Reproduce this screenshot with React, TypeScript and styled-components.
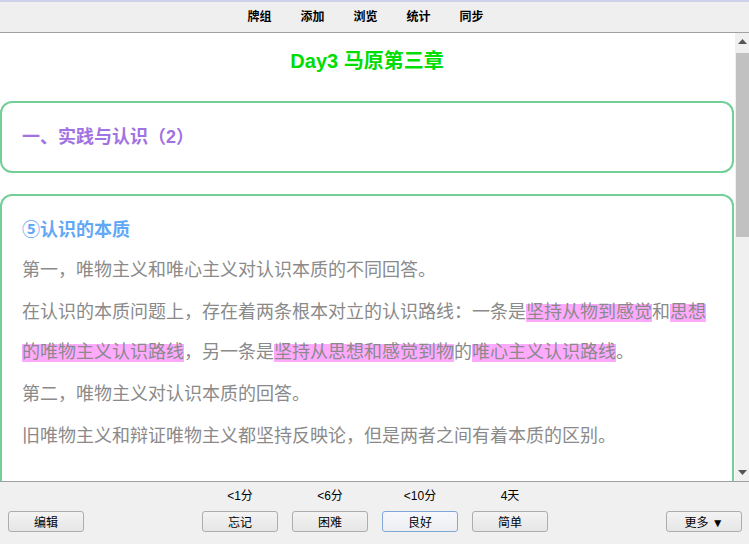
import React from 'react'
import styled, { createGlobalStyle } from 'styled-components'

const GlobalStyle = createGlobalStyle`
  html, body {
    margin: 0;
    height: 100%;
    overflow: hidden;
    background: #f0f0f0;
  }
  #root {
    height: 100%;
  }
`

const cjk = `"Liberation Sans", "Noto Sans CJK SC", sans-serif`

const Window = styled.div`
  display: flex;
  flex-direction: column;
  height: 100vh;
  font-family: ${cjk};
`

const TopStrip = styled.div`
  height: 2px;
  background: #cdd1ea;
`

const Toolbar = styled.nav`
  display: flex;
  justify-content: center;
  align-items: center;
  gap: 29px;
  height: 30px;
  padding-right: 18px;
  background: #efefef;
  border-bottom: 1px solid #a0a0a0;
`

const NavLink = styled.span`
  font-size: 12px;
  font-weight: bold;
  color: #000;
  line-height: 14px;
`

const Main = styled.div`
  flex: 1;
  display: flex;
  min-height: 0;
`

const Content = styled.div`
  flex: 1;
  background: #fff;
  overflow: hidden;
  padding-right: 1px;
`

const Title = styled.h1`
  margin: 14px 0 26px;
  text-align: center;
  font-size: 20px;
  line-height: 28px;
  font-weight: bold;
  color: #00dd00;
`

const Card = styled.section<{ $gap?: number; $bottom?: number }>`
  border: 2px solid #72cf95;
  border-radius: 12px;
  padding: 22px 20px ${({ $bottom }) => $bottom ?? 22}px;
  margin-bottom: ${({ $gap }) => $gap ?? 0}px;
`

const Heading = styled.h2<{ $color: string }>`
  margin: 0;
  font-size: 18px;
  line-height: 24px;
  font-weight: bold;
  color: ${({ $color }) => $color};
`

const Paragraph = styled.p<{ $top?: number }>`
  margin: ${({ $top }) => $top ?? 2}px 0 0;
  font-size: 18px;
  line-height: 40px;
  color: #8a8a8a;
`

const Mark = styled.span`
  background: linear-gradient(transparent 2px, #ffaaff 2px, #ffaaff 23px, transparent 23px);
`

const Scrollbar = styled.div`
  width: 14px;
  display: flex;
  flex-direction: column;
  background: #f0f0f0;
`

const Arrow = styled.div`
  height: 17px;
  display: flex;
  align-items: center;
  justify-content: center;
`

const Thumb = styled.div`
  height: 184px;
  margin: 3px 0 0 1px;
  background: #c1c1c1;
`

const Spacer = styled.div`
  flex: 1;
`

const BottomBar = styled.footer`
  display: grid;
  grid-template-columns: 1fr auto 1fr;
  align-items: end;
  height: 63px;
  padding: 7px 7px 13px 8px;
  box-sizing: border-box;
  border-top: 1px solid #a0a0a0;
  background: #f0f0f0;
`

const AnswerGroup = styled.div`
  display: flex;
  gap: 14px;
`

const AnswerColumn = styled.div`
  display: flex;
  flex-direction: column;
  align-items: center;
  gap: 8px;
`

const Interval = styled.span`
  font-size: 12px;
  line-height: 14px;
  color: #000;
`

const Button = styled.button<{ $focused?: boolean; $align?: string }>`
  justify-self: ${({ $align }) => $align ?? 'center'};
  width: 76px;
  height: 21px;
  padding: 0;
  font-family: ${cjk};
  font-size: 12px;
  color: #000;
  border: 1px solid ${({ $focused }) => ($focused ? '#7fa6d6' : '#adadad')};
  border-radius: 3px;
  background: ${({ $focused }) =>
    $focused ? 'linear-gradient(#f6f8fb, #eceef2)' : 'linear-gradient(#f3f3f3, #e6e6e6)'};
`

const TriUp = () => (
  <svg width="9" height="5" viewBox="0 0 9 5">
    <path d="M0 5 L4.5 0 L9 5 Z" fill="#555" />
  </svg>
)

const TriDown = () => (
  <svg width="9" height="5" viewBox="0 0 9 5">
    <path d="M0 0 L4.5 5 L9 0 Z" fill="#555" />
  </svg>
)

const navItems = ['牌组', '添加', '浏览', '统计', '同步']

const answers = [
  { interval: '<1分', label: '忘记' },
  { interval: '<6分', label: '困难' },
  { interval: '<10分', label: '良好', focused: true },
  { interval: '4天', label: '简单' }
]

const App = () => (
  <>
    <GlobalStyle />
    <Window>
      <TopStrip />
      <Toolbar>
        {navItems.map(item => <NavLink key={item}>{item}</NavLink>)}
      </Toolbar>
      <Main>
        <Content>
          <Title>Day3 马原第三章</Title>
          <Card $gap={21}>
            <Heading $color="#a072e2">一、实践与认识（2）</Heading>
          </Card>
          <Card $bottom={80}>
            <Heading $color="#62a8f6">⑤认识的本质</Heading>
            <Paragraph $top={8}>第一，唯物主义和唯心主义对认识本质的不同回答。</Paragraph>
            <Paragraph>
              在认识的本质问题上，存在着两条根本对立的认识路线：一条是<Mark>坚持从物到感觉</Mark>和<Mark>思想的唯物主义认识路线</Mark>，另一条是<Mark>坚持从思想和感觉到物</Mark>的<Mark>唯心主义认识路线</Mark>。
            </Paragraph>
            <Paragraph>第二，唯物主义对认识本质的回答。</Paragraph>
            <Paragraph>旧唯物主义和辩证唯物主义都坚持反映论，但是两者之间有着本质的区别。</Paragraph>
          </Card>
        </Content>
        <Scrollbar>
          <Arrow><TriUp /></Arrow>
          <Thumb />
          <Spacer />
          <Arrow><TriDown /></Arrow>
        </Scrollbar>
      </Main>
      <BottomBar>
        <Button $align="start">编辑</Button>
        <AnswerGroup>
          {answers.map(a => (
            <AnswerColumn key={a.label}>
              <Interval>{a.interval}</Interval>
              <Button $focused={a.focused}>{a.label}</Button>
            </AnswerColumn>
          ))}
        </AnswerGroup>
        <Button $align="end">更多 ▼</Button>
      </BottomBar>
    </Window>
  </>
)

export default App
